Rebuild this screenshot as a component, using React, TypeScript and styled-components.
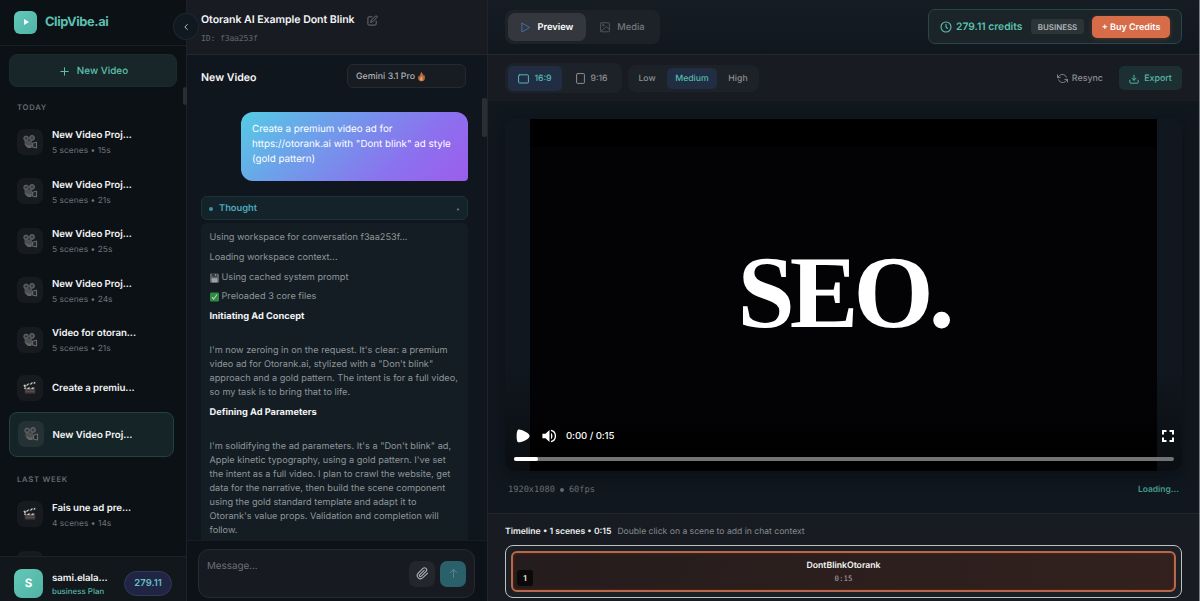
import React from 'react';
import styled, { createGlobalStyle, css } from 'styled-components';

const Global = createGlobalStyle`
  *, *::before, *::after { box-sizing: border-box; }
  html, body { margin: 0; padding: 0; background: #10171e; overflow: hidden; }
  body { font-family: Inter, "Liberation Sans", sans-serif; color: #f4f5f6; text-rendering: geometricPrecision; }
  button { font: inherit; color: inherit; border: 0; background: none; padding: 0; margin: 0; text-rendering: inherit; }
  svg { display: block; flex: none; }
`;

const Shell = styled.div`
  display: flex;
  width: 1200px;
  height: 601px;
  overflow: hidden;
  position: relative;
  border-right: 1px solid #7b7f82;
`;

/* ---------- sidebar ---------- */
const Sidebar = styled.aside`
  width: 187px;
  flex: none;
  display: flex;
  flex-direction: column;
  background: #0c1116;
  border-right: 1px solid #1c2127;
`;
const Brand = styled.div`
  height: 46px;
  flex: none;
  display: flex;
  align-items: center;
  gap: 8px;
  padding: 0 0 1px 14px;
  border-bottom: 1px solid #192024;
  color: #5cc0b0;
  font-size: 12.9px;
  font-weight: 700;
  letter-spacing: -0.44px;
`;
const Logo = styled.span`
  width: 23px;
  height: 23px;
  border-radius: 6px;
  background: linear-gradient(135deg, #63c9b9, #4fb3a5);
  display: grid;
  place-items: center;
`;
const NewButton = styled.button`
  margin: 8px 9px 0;
  padding: 1px 0 0 2px;
  height: 33px;
  flex: none;
  border-radius: 8px;
  border: 1px solid #1a2b2c;
  background: #182629;
  color: #5cc0b0;
  font-size: 9.9px;
  font-weight: 500;
  display: flex;
  align-items: center;
  justify-content: center;
  gap: 8px;
`;
const History = styled.div`
  flex: 1;
  min-height: 0;
  overflow: hidden;
  display: flex;
  flex-direction: column;
`;
const GroupLabel = styled.div<{ $top: number; $bottom: number }>`
  margin: ${p => p.$top}px 0 ${p => p.$bottom}px 17px;
  height: 10px;
  flex: none;
  line-height: 10px;
  font-size: 7.7px;
  font-weight: 600;
  letter-spacing: 0.72px;
  color: #666b6f;
`;
const Item = styled.div<{ $active?: boolean; $short?: boolean }>`
  height: ${p => (p.$short ? 44.5 : 47.5)}px;
  margin: 0 12px 2px 9px;
  flex: none;
  padding-left: 8px;
  border-radius: 8px;
  display: flex;
  align-items: center;
  gap: 9px;
  ${p => p.$active && css`
    gap: 8.5px;
    border: 1px solid #23413f;
    background: #142427;
  `}
`;
const Thumb = styled.span<{ $active?: boolean }>`
  width: 26px;
  height: 26px;
  flex: none;
  border-radius: 7px;
  background: ${p => (p.$active ? '#253235' : '#171b1f')};
  display: grid;
  place-items: center;
`;
const ItemText = styled.div`
  padding-top: 2px;
`;
const ItemName = styled.div`
  padding-top: 1px;
  font-size: 9.7px;
  font-weight: 600;
  line-height: 14px;
  letter-spacing: -0.06px;
  color: #f4f5f6;
  white-space: nowrap;
`;
const ItemMeta = styled.div`
  font-size: 8.4px;
  line-height: 12px;
  margin-top: 2px;
  color: #6f7377;
  letter-spacing: 0.04px;
`;
const Account = styled.div`
  height: 45px;
  flex: none;
  border-top: 1px solid #1c2226;
  background: #11171b;
  display: flex;
  align-items: center;
  padding: 8px 14px 0 14px;
`;
const Avatar = styled.span`
  width: 29px;
  height: 29px;
  border-radius: 8px;
  background: linear-gradient(135deg, #63c9b9, #50b2a4);
  color: #fff;
  font-size: 11.5px;
  font-weight: 700;
  display: grid;
  place-items: center;
`;
const AccountText = styled.div`
  flex: 1;
  margin-left: 9px;
  padding-top: 1px;
  white-space: nowrap;
`;
const Plan = styled.div`
  color: #58b5a6;
  font-size: 7.9px;
  font-weight: 500;
  line-height: 11px;
`;
const Balance = styled.span`
  width: 48px;
  height: 25px;
  border-radius: 13px;
  border: 1px solid #34365c;
  background: #1f2543;
  color: #65bfc4;
  font-size: 9.5px;
  font-weight: 600;
  display: grid;
  place-items: center;
`;
const Collapse = styled.button`
  position: absolute;
  left: 173px;
  top: 13px;
  width: 26px;
  height: 27px;
  border-radius: 50%;
  border: 1px solid #1e2830;
  background: #101920;
  display: grid;
  place-items: center;
`;
const ScrollThumb = styled.span<{ $x: number; $y: number; $w: number; $h: number }>`
  position: absolute;
  left: ${p => p.$x}px;
  top: ${p => p.$y}px;
  width: ${p => p.$w}px;
  height: ${p => p.$h}px;
  border-radius: 2px;
  background: #292e34;
`;

/* ---------- chat ---------- */
const Chat = styled.section`
  width: 301px;
  flex: none;
  display: flex;
  flex-direction: column;
  background: #10161d;
  border-right: 1px solid #20252c;
`;
const ProjectHead = styled.header`
  height: 55px;
  flex: none;
  padding: 12px 0 0 14px;
  background: #181b22;
  border-bottom: 1px solid #22272d;
`;
const ProjectTitle = styled.div`
  display: flex;
  align-items: center;
  gap: 12px;
  font-size: 10.6px;
  font-weight: 600;
  line-height: 16px;
  letter-spacing: -0.06px;
`;
const ProjectId = styled.div`
  margin-top: 5px;
  font: 8.2px/10px "DejaVu Sans Mono", "Liberation Mono", monospace;
  letter-spacing: -0.2px;
  color: #62666b;
`;
const ModelRow = styled.div`
  height: 43px;
  flex: none;
  display: flex;
  justify-content: space-between;
  align-items: center;
  padding: 0 21px 0 14px;
`;
const ModelTitle = styled.span`
  padding-top: 1.5px;
  font-size: 10.6px;
  font-weight: 600;
`;
const ModelSelect = styled.div`
  width: 119px;
  height: 24px;
  margin-bottom: 1px;
  border-radius: 6px;
  border: 1px solid #252a30;
  background: #171b22;
  display: flex;
  align-items: center;
  gap: 2px;
  padding: 1px 0 0 8px;
  font-size: 8.8px;
  font-weight: 500;
  color: #aeb1b4;
`;
const Messages = styled.div`
  flex: 1;
  min-height: 0;
  overflow: hidden;
  padding: 14px 19px 0 14px;
`;
const Bubble = styled.div`
  margin-left: 40px;
  height: 69px;
  padding: 10px 11px;
  border-radius: 12px 12px 4px 12px;
  background: linear-gradient(135deg, #55cce5 0%, #6ca2ea 30%, #8b72ee 70%, #9c5dec 100%);
  color: #fff;
  font-size: 9.8px;
  line-height: 15px;
  white-space: pre;
`;
const ThoughtBar = styled.div`
  margin-top: 15px;
  height: 24px;
  border-radius: 6px;
  border: 1px solid #1b3238;
  background: #14222a;
  display: flex;
  align-items: center;
  padding: 1px 7px 0;
  color: #4fa9bd;
  font-size: 9.3px;
  font-weight: 600;
`;
const Dot = styled.span<{ $size: number; $color: string }>`
  width: ${p => p.$size}px;
  height: ${p => p.$size}px;
  border-radius: 50%;
  background: ${p => p.$color};
`;
const ThoughtLabel = styled.span`
  flex: 1;
  margin-left: 6px;
`;
const ThoughtBody = styled.div`
  margin-top: 3px;
  height: 330px;
  border-radius: 6px 6px 0 0;
  padding: 8.4px 8.5px;
  background: #131d23;
  color: #90959a;
  font-size: 9.18px;
  line-height: 14px;
  white-space: pre;
`;
const ThoughtLine = styled.div`
  display: flex;
  align-items: center;
  gap: 3px;
  height: 14px;
  margin-bottom: 5.67px;
`;
const ThoughtHeading = styled.div`
  color: #f3f4f5;
  font-weight: 700;
  font-size: 9.25px;
  margin-bottom: 20px;
`;
const ThoughtText = styled.div`
  margin-bottom: 5.5px;
`;
const Composer = styled.div`
  height: 61px;
  flex: none;
  padding: 8px 12px 3px 11px;
  background: #0d1118;
  border-top: 1px solid #181d23;
`;
const MessageBox = styled.div`
  height: 49px;
  border: 1px solid #272b31;
  border-radius: 11px;
  background: #171a21;
  display: flex;
  align-items: center;
  gap: 5px;
  padding-right: 8px;
`;
const Placeholder = styled.span`
  flex: 1;
  align-self: flex-start;
  padding: 10px 0 0 8px;
  color: #6d7176;
  font-size: 9.8px;
  line-height: 14px;
`;
const SquareButton = styled.button<{ $send?: boolean }>`
  width: 26px;
  height: 26px;
  border-radius: 7px;
  background: ${p => (p.$send ? '#296069' : '#23262c')};
  display: grid;
  place-items: center;
`;

/* ---------- workspace ---------- */
const Workspace = styled.main`
  flex: 1;
  min-width: 0;
  display: flex;
  flex-direction: column;
  background: #10171e;
`;
const TopBar = styled.header`
  height: 55px;
  flex: none;
  display: flex;
  align-items: center;
  justify-content: space-between;
  padding: 0 17px 1px;
  background: linear-gradient(#151c24, #10171e);
  border-bottom: 1px solid #22282e;
`;
const Segments = styled.div<{ $w: number; $h: number }>`
  width: ${p => p.$w}px;
  height: ${p => p.$h}px;
  padding: 3px;
  border-radius: 8px;
  background: #1d2228;
  display: flex;
  align-items: center;
`;
const Tab = styled.button<{ $w: number; $on?: boolean }>`
  width: ${p => p.$w}px;
  height: 28px;
  padding: 1px 0 0 ${p => (p.$on ? 0 : 2)}px;
  border-radius: 7px;
  background: ${p => (p.$on ? '#34383e' : 'transparent')};
  color: ${p => (p.$on ? '#fff' : '#73787d')};
  font-size: 9.3px;
  font-weight: ${p => (p.$on ? 600 : 500)};
  display: flex;
  align-items: center;
  justify-content: center;
  gap: 7px;
`;
const Option = styled.button<{ $w: number; $h: number; $end?: number; $on?: boolean }>`
  width: ${p => p.$w}px;
  height: ${p => p.$h}px;
  padding: 1px ${p => p.$end ?? 0}px 0 0;
  flex: none;
  border-radius: 5px;
  background: ${p => (p.$on ? '#202d42' : 'transparent')};
  color: ${p => (p.$on ? '#55baaf' : '#8b8f93')};
  font-size: 8.7px;
  font-weight: 500;
  display: flex;
  align-items: center;
  justify-content: center;
  gap: 5px;
`;
const Credits = styled.div`
  width: 254px;
  height: 35px;
  border: 1px solid #29474a;
  border-radius: 7px;
  background: #1a2429;
  color: #5cc0b0;
  display: flex;
  align-items: center;
  padding: 0 11px;
  font-size: 10.3px;
  font-weight: 600;
`;
const CreditsText = styled.span`
  margin-left: 4px;
  padding-top: 1px;
  flex: 1;
  white-space: nowrap;
`;
const PlanTag = styled.span`
  width: 53px;
  height: 15px;
  margin-right: 8px;
  padding-top: 1px;
  border-radius: 3px;
  background: #2b3538;
  color: #b3b7b9;
  font-size: 7.9px;
  font-weight: 600;
  display: grid;
  place-items: center;
`;
const Buy = styled.button`
  width: 78px;
  height: 22px;
  padding-top: 1px;
  border-radius: 5px;
  background: #d66c48;
  color: #fff;
  font-size: 9px;
  font-weight: 600;
  box-shadow: 0 1px 5px #c9603f50;
`;
const Toolbar = styled.div`
  height: 46px;
  flex: none;
  display: flex;
  align-items: center;
  gap: 6px;
  padding: 0 17px;
  background: #181b21;
`;
const Resync = styled.button`
  margin-left: auto;
  margin-right: 10px;
  padding-top: 1px;
  display: flex;
  align-items: center;
  gap: 4px;
  color: #888c90;
  font-size: 8.9px;
  font-weight: 500;
`;
const Export = styled.button`
  width: 63px;
  height: 24px;
  padding-top: 1px;
  border-radius: 5px;
  background: #1c3034;
  color: #58b7a9;
  font-size: 8.9px;
  font-weight: 500;
  display: flex;
  align-items: center;
  justify-content: center;
  gap: 5px;
`;
const Player = styled.div`
  position: relative;
  margin: 18px 17px 0;
  height: 352px;
  flex: none;
  border-radius: 10px;
  background: linear-gradient(#10171e 70%, #0a0e12);
  box-shadow: 0 5px 14px #090d1290;
  display: flex;
  justify-content: center;
`;
const Frame = styled.div`
  width: 627px;
  padding-bottom: 3px;
  background: linear-gradient(#000 0 28px, #030305 28px 300px, #000 330px);
  display: flex;
  align-items: center;
  justify-content: center;
`;
const Slogan = styled.span`
  font-family: "Liberation Serif", serif;
  font-size: 103px;
  font-weight: 700;
  letter-spacing: -5px;
  line-height: 1;
  color: #fff;
`;
const Controls = styled.div`
  position: absolute;
  left: 9px;
  right: 8px;
  bottom: 0;
  height: 46px;
`;
const ControlRow = styled.div`
  height: 22px;
  display: flex;
  align-items: center;
  padding: 0 0 0 2px;
  font-size: 9.6px;
  font-weight: 500;
  color: #fff;
`;
const Clock = styled.span`
  flex: 1;
  margin-left: 9px;
  padding-top: 1px;
  letter-spacing: -0.07px;
`;
const Track = styled.div`
  margin-top: 10px;
  height: 4px;
  border-radius: 2px;
  background: #737373;
`;
const Loaded = styled.div`
  width: 24px;
  height: 4px;
  border-radius: 2px;
  background: #fff;
`;
const InfoRow = styled.div`
  height: 42px;
  flex: none;
  display: flex;
  align-items: center;
  justify-content: space-between;
  padding: 0 20px 5px;
`;
const Specs = styled.span`
  display: flex;
  align-items: center;
  gap: 5px;
  font: 8.7px "DejaVu Sans Mono", "Liberation Mono", monospace;
  letter-spacing: -0.02px;
  color: #6a6f74;
`;
const Loading = styled.span`
  color: #459c91;
  font-size: 8.5px;
  font-weight: 600;
`;
const Timeline = styled.section`
  flex: 1;
  border-top: 1px solid #20262c;
  background: #181c22;
  padding: 10.5px 17px 0;
`;
const TimelineHead = styled.div`
  height: 14px;
  display: flex;
  align-items: center;
  gap: 6px;
  font-size: 8.65px;
  font-weight: 600;
  color: #eceeef;
`;
const Hint = styled.span`
  color: #868a8e;
  font-weight: 400;
  font-size: 8.6px;
`;
const SceneTrack = styled.div`
  margin-top: 6.5px;
  height: 53px;
  border: 1px solid #bfc1c2;
  border-radius: 8px;
  padding: 5px;
  background: #1b2025;
`;
const Scene = styled.div`
  position: relative;
  height: 41px;
  border: 2px solid #b7684c;
  border-radius: 6px;
  background: linear-gradient(100deg, #251c1d, #32211e);
  box-shadow: inset 0 0 3px #632914;
  display: flex;
  flex-direction: column;
  align-items: center;
  padding-top: 8px;
`;
const SceneName = styled.span`
  font-size: 8.7px;
  line-height: 11px;
  font-weight: 600;
`;
const SceneTime = styled.span`
  margin-top: 2px;
  font: 7.4px/10px "DejaVu Sans Mono", monospace;
  letter-spacing: 0.1px;
  color: #aaa5a4;
`;
const SceneNumber = styled.span`
  position: absolute;
  left: 4px;
  bottom: 4px;
  width: 16px;
  height: 16px;
  border-radius: 3px;
  background: #0b0909;
  display: grid;
  place-items: center;
  font-size: 8px;
  font-weight: 600;
`;

/* ---------- drawings ---------- */
const line = { fill: 'none', stroke: 'currentColor', strokeLinecap: 'round', strokeLinejoin: 'round' } as const;

const CameraIcon = () => (
  <svg width="16" height="16" viewBox="0 0 16 16">
    <path d="M2.4 6.8l7.3-.5 1 4.2-1.8 3.4H6L2.6 10.6z" fill="#4c4e50" />
    <path d="M3 10l4 1.8 2.6-.9v3H6.1L3.6 12z" fill="#737476" opacity=".6" />
    <circle cx="4.1" cy="4.4" r="2.4" fill="#4b4e50" stroke="#6c6f71" strokeWidth=".7" />
    <circle cx="10" cy="3.9" r="2.5" fill="#4b4e50" stroke="#707375" strokeWidth=".7" />
    <circle cx="4.1" cy="4.4" r=".7" fill="#1b1d1f" />
    <circle cx="10" cy="3.9" r=".7" fill="#1b1d1f" />
    <path d="M10.6 9.2l4-1.2v6l-4-.8z" fill="#252729" stroke="#7d7f80" strokeWidth=".8" />
  </svg>
);
const ClapperIcon = () => (
  <svg width="16" height="16" viewBox="0 0 16 16">
    <path d="M2.5 7.7h10.7v5.8H3z" fill="#443c3c" />
    <path d="M3.4 9.5h9M3.6 11.4h8.7" stroke="#665755" strokeWidth=".7" />
    <path d="M1.7 5l11-3.2.6 2L2.3 7z" fill="#27292b" />
    <path d="M1.4 4.9l1.8-.5 1 2-2 .6zM5.2 3.9l2.1-.6-1.3 2-2 .6zM9 2.8l2-.6-1.2 2-2 .6zM12.1 2l1-.2.4 1.5-2 .6zM2.3 7.5h2L3.4 9H2.3zM6.2 7.5h2.2L7.2 9H5zM10.2 7.5h2.3L11.2 9H9z" fill="#c7cccb" />
  </svg>
);
const Flame = () => (
  <svg width="9" height="11" viewBox="0 0 9 11">
    <path d="M4.1.6C5.3 2.4 6 3 6.4 4.7L7 3.5c1.8 3.2 1.2 6.8-2.4 6.8S.3 7 1.9 4.5l.7 1C2.5 3.4 4.4 2.5 4.1.6z" fill="#b7673a" />
    <path d="M4.5 5C5.8 7 6.2 9.6 4.4 9.7S2.5 8 3.5 6.8z" fill="#e0a060" />
  </svg>
);
const Floppy = () => (
  <svg width="9" height="10" viewBox="0 0 9 10">
    <path d="M0 .5h8l1 1v8H0z" fill="#596068" />
    <path d="M2 .5h5v3H2z" fill="#343a42" />
    <path d="M1.5 5.2h6v4.3h-6z" fill="#9da2a5" />
    <path d="M5.2 1h1v1.8h-1z" fill="#a4a9ac" />
  </svg>
);
const CheckBox = () => (
  <svg width="9" height="10" viewBox="0 0 9 10">
    <rect y=".5" width="9" height="9" rx="1.2" fill="#2f8b40" />
    <path d="M2 5.2l1.7 2L7 2.5" fill="none" stroke="#b7d5bb" strokeWidth="1.1" />
  </svg>
);
const SpeakerIcon = styled.svg`
  margin-left: 12px;
`;

const today: { name: string; meta?: string; clap?: boolean; active?: boolean }[] = [
  { name: 'New Video Proj...', meta: '5 scenes • 15s' },
  { name: 'New Video Proj...', meta: '5 scenes • 21s' },
  { name: 'New Video Proj...', meta: '5 scenes • 25s' },
  { name: 'New Video Proj...', meta: '5 scenes • 24s' },
  { name: 'Video for otoran...', meta: '5 scenes • 21s' },
  { name: 'Create a premiu...', clap: true },
  { name: 'New Video Proj...', active: true },
];
const lastWeek = [
  { name: 'Fais une ad pre...', meta: '4 scenes • 14s', clap: true },
  { name: '', meta: '' },
];

function HistoryItem({ name, meta, clap, active }: { name: string; meta?: string; clap?: boolean; active?: boolean }) {
  return (
    <Item $active={active} $short={meta === undefined}>
      <Thumb $active={active}>{clap ? <ClapperIcon /> : <CameraIcon />}</Thumb>
      <ItemText>
        <ItemName>{name}</ItemName>
        {meta && <ItemMeta>{meta}</ItemMeta>}
      </ItemText>
    </Item>
  );
}

export default function App() {
  return (
    <>
      <Global />
      <Shell>
        <Sidebar>
          <Brand>
            <Logo><svg width="8" height="8" viewBox="0 0 8 8"><path d="M2 1.1l5 2.9-5 2.9z" fill="#fff" /></svg></Logo>
            ClipVibe.ai
          </Brand>
          <NewButton>
            <svg width="9" height="9" viewBox="0 0 9 9" {...line}><path d="M4.5.8v7.4M.8 4.5h7.4" /></svg>
            New Video
          </NewButton>
          <History>
            <GroupLabel $top={15.5} $bottom={5.5}>TODAY</GroupLabel>
            {today.map((t, i) => <HistoryItem key={i} {...t} />)}
            <GroupLabel $top={16} $bottom={6}>LAST WEEK</GroupLabel>
            {lastWeek.map((t, i) => <HistoryItem key={i} {...t} />)}
          </History>
          <Account>
            <Avatar>S</Avatar>
            <AccountText>
              <ItemName>sami.elala...</ItemName>
              <Plan>business Plan</Plan>
            </AccountText>
            <Balance>279.11</Balance>
          </Account>
        </Sidebar>

        <Chat>
          <ProjectHead>
            <ProjectTitle>
              Otorank AI Example Dont Blink
              <svg width="11" height="11" viewBox="0 0 24 24" {...line} stroke="#73777b" strokeWidth="2">
                <path d="M11 4H4a2 2 0 0 0-2 2v14a2 2 0 0 0 2 2h14a2 2 0 0 0 2-2v-7" />
                <path d="M18.5 2.5a2.1 2.1 0 0 1 3 3L12 15l-4 1 1-4z" />
              </svg>
            </ProjectTitle>
            <ProjectId>ID: f3aa253f</ProjectId>
          </ProjectHead>
          <ModelRow>
            <ModelTitle>New Video</ModelTitle>
            <ModelSelect>Gemini 3.1 Pro <Flame /></ModelSelect>
          </ModelRow>
          <Messages>
            <Bubble>{'Create a premium video ad for\nhttps://otorank.ai with "Dont blink" ad style\n(gold pattern)'}</Bubble>
            <ThoughtBar>
              <Dot $size={4} $color="#3f8fa2" />
              <ThoughtLabel>Thought</ThoughtLabel>
              <svg width="4" height="4" viewBox="0 0 4 4"><path d="M2 .7l1.5 2.6h-3z" fill="#637b82" /></svg>
            </ThoughtBar>
            <ThoughtBody>
              <ThoughtLine>Using workspace for conversation f3aa253f...</ThoughtLine>
              <ThoughtLine>Loading workspace context...</ThoughtLine>
              <ThoughtLine><Floppy />Using cached system prompt</ThoughtLine>
              <ThoughtLine><CheckBox />Preloaded 3 core files</ThoughtLine>
              <ThoughtHeading>Initiating Ad Concept</ThoughtHeading>
              <ThoughtText>{'I\'m now zeroing in on the request. It\'s clear: a premium\nvideo ad for Otorank.ai, stylized with a "Don\'t blink"\napproach and a gold pattern. The intent is for a full video,\nso my task is to bring that to life.'}</ThoughtText>
              <ThoughtHeading>Defining Ad Parameters</ThoughtHeading>
              <ThoughtText>{'I\'m solidifying the ad parameters. It\'s a "Don\'t blink" ad,\nApple kinetic typography, using a gold pattern. I\'ve set\nthe intent as a full video. I plan to crawl the website, get\ndata for the narrative, then build the scene component\nusing the gold standard template and adapt it to\nOtorank\'s value props. Validation and completion will\nfollow.'}</ThoughtText>
            </ThoughtBody>
          </Messages>
          <Composer>
            <MessageBox>
              <Placeholder>Message...</Placeholder>
              <SquareButton>
                <svg width="13" height="13" viewBox="0 0 24 24" {...line} stroke="#b0b3b6" strokeWidth="2">
                  <path d="M21.4 11.1l-9.2 9.1a6 6 0 0 1-8.5-8.4l9.2-9.2a4 4 0 0 1 5.7 5.6l-9.2 9.2a2 2 0 0 1-2.8-2.8l8.5-8.5" />
                </svg>
              </SquareButton>
              <SquareButton $send>
                <svg width="11" height="11" viewBox="0 0 24 24" {...line} stroke="#60868c" strokeWidth="2"><path d="M12 21V3M5 10l7-7 7 7" /></svg>
              </SquareButton>
            </MessageBox>
          </Composer>
        </Chat>

        <Workspace>
          <TopBar>
            <Segments $w={155} $h={34}>
              <Tab $w={78} $on>
                <svg width="10" height="11" viewBox="0 0 10 11" {...line} stroke="#436ca7"><path d="M1.2 1.2l7.4 4.3-7.4 4.3z" /></svg>
                Preview
              </Tab>
              <Tab $w={71}>
                <svg width="10" height="11" viewBox="0 0 10 11" {...line} stroke="#545a60" strokeWidth=".9">
                  <rect x=".6" y=".8" width="8.8" height="9" rx=".7" /><circle cx="3.1" cy="3.2" r=".7" /><path d="M1 9.2l5.4-4.6 2.8 2.7" />
                </svg>
                Media
              </Tab>
            </Segments>
            <Credits>
              <svg width="12" height="12" viewBox="0 0 12 12" {...line} strokeWidth="1.1"><circle cx="6" cy="6" r="5" /><path d="M6 3.2V6l1.5 1.4" /></svg>
              <CreditsText>279.11 credits</CreditsText>
              <PlanTag>BUSINESS</PlanTag>
              <Buy>+ Buy Credits</Buy>
            </Credits>
          </TopBar>
          <Toolbar>
            <Segments $w={117} $h={30}>
              <Option $w={54} $h={25} $on>
                <svg width="11" height="10" viewBox="0 0 11 10" {...line}><rect x=".6" y=".8" width="9.8" height="8.2" rx=".8" /></svg>
                16:9
              </Option>
              <Option $w={60} $h={25}>
                <svg width="9" height="11" viewBox="0 0 9 11" {...line}><rect x=".6" y=".6" width="7.8" height="9.8" rx=".8" /></svg>
                9:16
              </Option>
            </Segments>
            <Segments $w={131} $h={27}>
              <Option $w={36} $h={21} $end={4}>Low</Option>
              <Option $w={50} $h={21} $on>Medium</Option>
              <Option $w={42} $h={21}>High</Option>
            </Segments>
            <Resync>
              <svg width="11" height="11" viewBox="0 0 24 24" {...line} strokeWidth="2">
                <path d="M1 4v6h6M23 20v-6h-6" /><path d="M20.5 9A9 9 0 0 0 5.6 5.6L1 10m22 4l-4.6 4.4A9 9 0 0 1 3.5 15" />
              </svg>
              Resync
            </Resync>
            <Export>
              <svg width="10" height="10" viewBox="0 0 24 24" {...line} strokeWidth="2.3"><path d="M2 15v5a2 2 0 0 0 2 2h16a2 2 0 0 0 2-2v-5M7 10l5 5 5-5M12 15V3" /></svg>
              Export
            </Export>
          </Toolbar>
          <Player>
            <Frame><Slogan>SEO.</Slogan></Frame>
            <Controls>
              <ControlRow>
                <svg width="14" height="14" viewBox="0 0 14 14"><path d="M2 .8c1-1 8.5 1.6 10.8 4.5q1.5 1.7 0 3.4C10.5 11.6 3 14.2 1.7 13 .2 11.5.2 2.6 2 .8z" fill="#fff" /></svg>
                <SpeakerIcon width="15" height="14" viewBox="0 0 15 14">
                  <path d="M.4 4.7h3.1L7.5 1v12l-4-3.7H.4z" fill="#fff" />
                  <path d="M9 3.9c1.9 1.1 1.9 5.1 0 6.2z" fill="#fff" />
                  <path d="M9 1.4c5.9 1.3 5.9 9.9 0 11.2" fill="none" stroke="#fff" strokeWidth="1.3" />
                </SpeakerIcon>
                <Clock>0:00 / 0:15</Clock>
                <svg width="12" height="12" viewBox="0 0 12 12" fill="none" stroke="#fff" strokeWidth="2"><path d="M1 4.5V1h3.5M7.5 1H11v3.5M11 7.5V11H7.5M4.5 11H1V7.5" /></svg>
              </ControlRow>
              <Track><Loaded /></Track>
            </Controls>
          </Player>
          <InfoRow>
            <Specs>1920x1080 <Dot $size={4} $color="#656a6f" /> 60fps</Specs>
            <Loading>Loading...</Loading>
          </InfoRow>
          <Timeline>
            <TimelineHead>Timeline • 1 scenes • 0:15 <Hint>Double click on a scene to add in chat context</Hint></TimelineHead>
            <SceneTrack>
              <Scene>
                <SceneName>DontBlinkOtorank</SceneName>
                <SceneTime>0:15</SceneTime>
                <SceneNumber>1</SceneNumber>
              </Scene>
            </SceneTrack>
          </Timeline>
        </Workspace>
        <Collapse aria-label="Collapse sidebar">
          <svg width="6" height="8" viewBox="0 0 6 8" {...line} stroke="#b8bec0"><path d="M4.3 1.5L1.8 4l2.5 2.5" /></svg>
        </Collapse>
        <ScrollThumb $x={183} $y={87} $w={4} $h={18} />
        <ScrollThumb $x={482} $y={98} $w={5} $h={39} />
      </Shell>
    </>
  );
}
